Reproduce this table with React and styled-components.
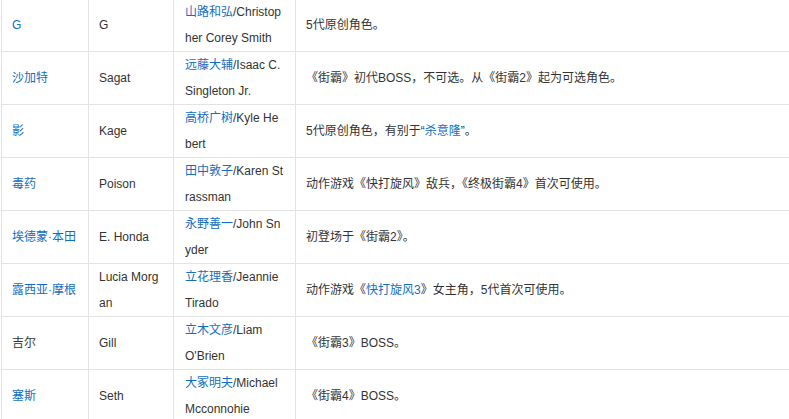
import React from 'react';
import styled, { createGlobalStyle } from 'styled-components';

const GlobalStyle = createGlobalStyle`
  html, body {
    margin: 0;
    padding: 0;
    background: #fff;
    overflow: hidden;
  }
  body {
    font-family: 'Liberation Sans', Arial, 'Noto Sans CJK SC', sans-serif;
    font-size: 12px;
    color: #333;
  }
`;

// 表格外框：只画上边和左边，单元格各自画右边和下边
const Table = styled.div`
  display: grid;
  grid-template-columns: 87px 85px 122px 540px;
  width: 834px;
  margin: -2px 0 0 1px;
  border-top: 1px solid #e3e3e3;
  border-left: 1px solid #e3e3e3;
`;

const Cell = styled.div`
  box-sizing: border-box;
  display: flex;
  align-items: center;
  min-height: 53px;
  padding: ${(p) => (p.$wide ? '0 11px' : '0 10px')};
  border-right: 1px solid #e3e3e3;
  border-bottom: 1px solid #e3e3e3;
  line-height: 26px;
  word-break: break-all;
`;

const Inner = styled.div`
  width: 100%;
`;

const A = styled.a`
  color: #136ec2;
  text-decoration: none;
  cursor: pointer;
`;

const rows = [
  {
    cn: 'G', cnLink: true, en: 'G',
    cv: ['山路和弘', '/Christopher Corey Smith'],
    desc: <>5代原创角色。</>,
  },
  {
    cn: '沙加特', cnLink: true, en: 'Sagat',
    cv: ['远藤大辅', '/Isaac C. Singleton Jr.'],
    desc: <>《街霸》初代BOSS，不可选。从《街霸2》起为可选角色。</>,
  },
  {
    cn: '影', cnLink: true, en: 'Kage',
    cv: ['高桥广树', '/Kyle Hebert'],
    desc: <>5代原创角色，有别于“<A>杀意隆</A>”。</>,
  },
  {
    cn: '毒药', cnLink: true, en: 'Poison',
    cv: ['田中敦子', '/Karen Strassman'],
    desc: <>动作游戏《快打旋风》敌兵，《终极街霸4》首次可使用。</>,
  },
  {
    cn: '埃德蒙·本田', cnLink: true, en: 'E. Honda',
    cv: ['永野善一', '/John Snyder'],
    desc: <>初登场于《街霸2》。</>,
  },
  {
    cn: '露西亚·摩根', cnLink: true, en: 'Lucia Morgan',
    cv: ['立花理香', '/Jeannie Tirado'],
    desc: <>动作游戏《<A>快打旋风3</A>》女主角，5代首次可使用。</>,
  },
  {
    cn: '吉尔', cnLink: false, en: 'Gill',
    cv: ['立木文彦', '/Liam O\'Brien'],
    desc: <>《街霸3》BOSS。</>,
  },
  {
    cn: '塞斯', cnLink: true, en: 'Seth',
    cv: ['大冢明夫', '/Michael Mcconnohie'],
    desc: <>《街霸4》BOSS。</>,
  },
];

export default function App() {
  return (
    <>
      <GlobalStyle />
      <Table>
        {rows.map((r) => (
          <React.Fragment key={r.en}>
            <Cell>
              <Inner>{r.cnLink ? <A>{r.cn}</A> : r.cn}</Inner>
            </Cell>
            <Cell>
              <Inner>{r.en}</Inner>
            </Cell>
            <Cell $wide>
              <Inner>
                <A>{r.cv[0]}</A>
                {r.cv[1]}
              </Inner>
            </Cell>
            <Cell>
              <Inner>{r.desc}</Inner>
            </Cell>
          </React.Fragment>
        ))}
      </Table>
    </>
  );
}
